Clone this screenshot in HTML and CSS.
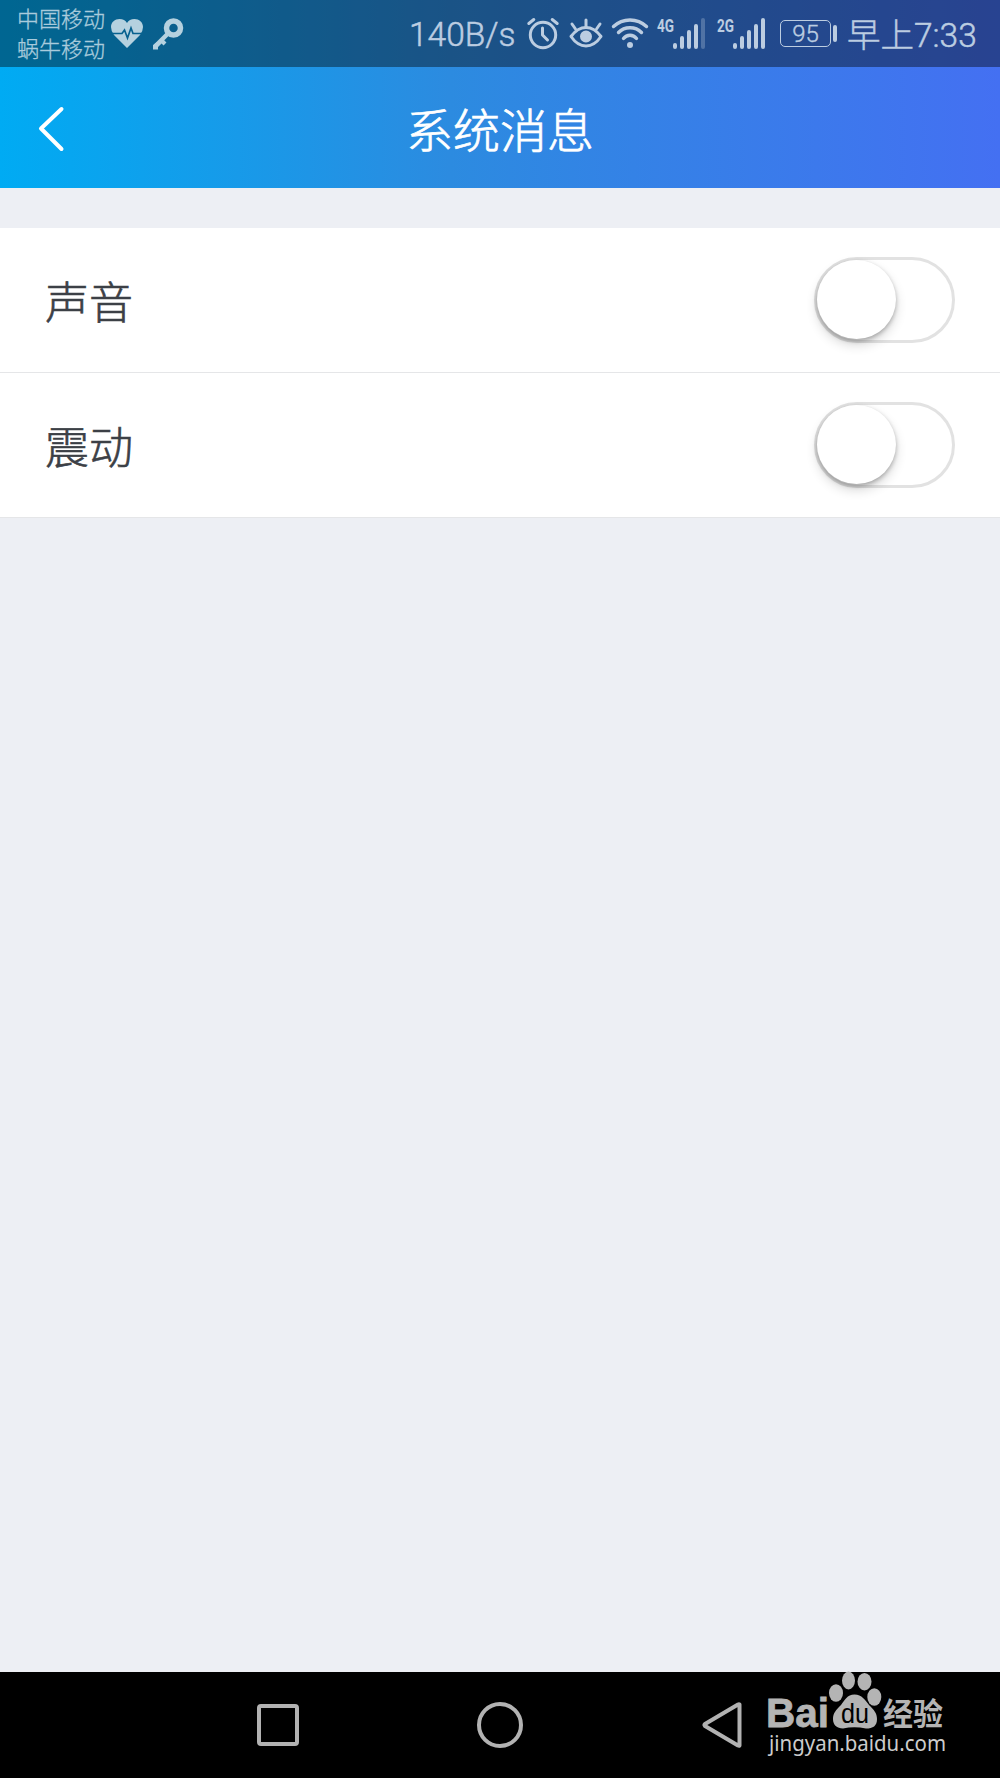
FILE: index.html
```
<!DOCTYPE html>
<html lang="zh-CN">
<head>
  <meta charset="UTF-8" />
  <meta name="viewport" content="width=device-width, initial-scale=1.0"/>
  <title>系统消息</title>
  <link rel="stylesheet" href="styles.css">
</head>
<body>
  <div class="screen">
    <div class="top">
      <div class="status-bar">
        <div class="carriers">
          <span>中国移动</span>
          <span>蜗牛移动</span>
        </div>
        <svg class="icon-heart" width="32" height="30" viewBox="0 0 32 30">
          <path d="M16 29L3 16Q0 12 0 8C0 3 4 0 8.500 0C12 0 14.500 1.500 16 4C17.500 1.500 20 0 23.500 0C28 0 32 3 32 8Q32 12 29 16Z" fill="currentColor"/>
          <path class="pulse" d="M0 14.500H11L13.500 11L16.500 19L20 9L22 14.500H32" fill="none" stroke-width="1.700"/>
        </svg>
        <svg class="icon-key" width="31" height="32" viewBox="0 0 31 32" fill="none" stroke="currentColor">
          <circle cx="20.500" cy="10" r="7" stroke-width="5.500"/>
          <path d="M15.500 15L2.500 28" stroke-width="4.500"/>
          <path d="M0 31.500V27L4 24L9 25L5 29V31.500Z" fill="currentColor" stroke="none"/>
          <path d="M8 22L12 26" stroke-width="4"/>
        </svg>

        <span class="speed">140B/s</span>
        <svg class="icon-alarm" width="32" height="32" viewBox="0 0 32 32" fill="none" stroke="currentColor" stroke-width="3" stroke-linecap="round" stroke-linejoin="round">
          <circle cx="16" cy="17" r="12.700"/>
          <path d="M15.500 10V17L20.500 22M1.800 5.500L6.800 1.500M25.200 1.500L30.200 5.500"/>
        </svg>
        <svg class="icon-eye" width="34" height="31" viewBox="0 0 34 31" fill="none" stroke="currentColor" stroke-width="3" stroke-linecap="round" stroke-linejoin="round">
          <path d="M2 18.500Q8.500 9.500 17 9.500T32 18.500Q25.500 28 17 28T2 18.500Z"/>
          <circle cx="17" cy="18.500" r="4.500" fill="currentColor"/>
          <path d="M17 2V9M3 6L6.500 11M31 6L27.500 11"/>
        </svg>
        <svg class="icon-wifi" width="38" height="31" viewBox="0 0 38 31" fill="none" stroke="currentColor" stroke-width="3.400" stroke-linecap="round">
          <path d="M2.500 8.500Q9.500 2 19 2T35.500 8.500M7.500 14.500Q12 9.700 19 9.700T30.500 14.500M12.500 20.500Q15 17.300 19 17.300T25.500 20.500"/>
          <circle cx="19" cy="27" r="3" fill="currentColor" stroke="none"/>
        </svg>
        <svg class="signal" width="50" height="31" viewBox="0 0 50 31" fill="none" stroke="currentColor" stroke-width="4" stroke-linecap="round">
          <text class="net" x="0" y="13.500" textLength="17" lengthAdjust="spacingAndGlyphs">4G</text>
          <path d="M18 27V29M25 20V29M32 14V29M39 8V29"/>
          <path class="dim" d="M46 2V29"/>
        </svg>
        <svg class="signal second" width="50" height="31" viewBox="0 0 50 31" fill="none" stroke="currentColor" stroke-width="4" stroke-linecap="round">
          <text class="net" x="0" y="13.500" textLength="17" lengthAdjust="spacingAndGlyphs">2G</text>
          <path d="M18 27V29M25 20V29M32 14V29M39 8V29M46 2V29"/>
        </svg>
        <div class="battery">95</div>
        <div class="battery-tip"></div>
        <span class="time">早上7:33</span>
      </div>

      <div class="header">
        <svg class="back" width="26" height="46" viewBox="0 0 26 46" fill="none" stroke="#fff" stroke-width="4" stroke-linecap="round" stroke-linejoin="round">
          <path d="M23.500 3L3 22.500L23.500 43"/>
        </svg>
        <h1>系统消息</h1>
      </div>
    </div>

    <div class="settings">
      <div class="row">
        <span>声音</span>
        <div class="switch"><div class="knob"></div></div>
      </div>
      <div class="row">
        <span>震动</span>
        <div class="switch"><div class="knob"></div></div>
      </div>
    </div>

    <div class="nav-bar">
      <svg width="42" height="42" viewBox="0 0 42 42" fill="none" stroke="currentColor" stroke-width="4">
        <rect x="2" y="2" width="38" height="38" rx="2"/>
      </svg>
      <svg width="46" height="46" viewBox="0 0 46 46" fill="none" stroke="currentColor" stroke-width="4">
        <circle cx="23" cy="23" r="21"/>
      </svg>
      <svg width="40" height="46" viewBox="0 0 40 46" fill="none" stroke="currentColor" stroke-width="4" stroke-linejoin="round">
        <path d="M37.500 2.500V43.500Q37 44 36 43.500L3 24Q2 23 3 22L36 2.500Q37 2 37.500 2.500Z"/>
      </svg>
    </div>

    <svg class="watermark" width="182" height="90" viewBox="0 0 182 90">
      <text class="brand" x="-1" y="55.500" textLength="63" lengthAdjust="spacingAndGlyphs">Bai</text>
      <ellipse cx="69" cy="22" rx="7" ry="8.800"/>
      <ellipse cx="81.500" cy="9.500" rx="6.500" ry="9"/>
      <ellipse cx="97.500" cy="10.700" rx="7" ry="8.700"/>
      <ellipse cx="107.300" cy="26" rx="7" ry="8.700"/>
      <path d="M87.500 23.500C95 23.500 98 29 102 34C107 39 110 42 110 48C110 55 106 57.500 99 57.500Q87 55 76 57.500C70 57.500 66 54 66 48C66 42 69 39 74 34C78 29 80 23.500 87.500 23.500Z"/>
      <text class="du" x="74" y="52" textLength="28" lengthAdjust="spacingAndGlyphs">du</text>
      <text class="exp" x="116" y="53.500" textLength="60" lengthAdjust="spacingAndGlyphs">经验</text>
      <text class="site" x="2" y="79.500" textLength="177" lengthAdjust="spacingAndGlyphs">jingyan.baidu.com</text>
    </svg>
  </div>
</body>
</html>
```
FILE: styles.css
```
* {
  box-sizing: border-box;
}

body {
  margin: 0;
  background: #edeff4;
  font-family: Roboto, "Noto Sans CJK SC", sans-serif;
}

.screen {
  position: relative;
  display: flex;
  flex-direction: column;
  width: 1000px;
  height: 1778px;
  overflow: hidden;
}

svg {
  display: block;
  flex-shrink: 0;
  overflow: visible;
}

.top {
  background: linear-gradient(90deg, #00abf3, #2c8be0 45%, #4470f2);
}

.status-bar {
  display: flex;
  align-items: center;
  height: 67px;
  padding-left: 17px;
  background: rgba(0, 0, 0, 0.4);
  color: #bccde1;
  white-space: nowrap;
}

.carriers {
  display: flex;
  flex-direction: column;
  width: 88px;
  font-size: 22px;
  font-weight: 300;
  line-height: 30px;
  padding-top: 3px;
  color: #a9cbdc;
  -webkit-text-stroke: 0.3px;
}

.icon-heart {
  margin-left: 6px;
  color: #b5d1df;
}

.pulse {
  stroke: #07618f;
}

.icon-key {
  margin-left: 10px;
  color: #b5d1df;
}

.speed {
  width: 106px;
  margin-left: 225px;
  padding-top: 2px;
  font-size: 33.5px;
  font-weight: 300;
  -webkit-text-stroke: 0.5px;
}

.icon-alarm {
  margin-left: 12px;
}

.icon-eye {
  margin-left: 10px;
}

.icon-wifi {
  margin-left: 8px;
}

.signal {
  margin-left: 8px;
}

.signal.second {
  margin-left: 10px;
}

.net {
  font: bold 19px Roboto, sans-serif;
  fill: currentColor;
  stroke: none;
}

.dim {
  opacity: 0.3;
}

.battery {
  width: 51px;
  height: 27px;
  margin-left: 13px;
  border: 1.5px solid;
  border-radius: 5px;
  font-size: 24px;
  font-weight: 300;
  line-height: 26px;
  text-align: center;
  -webkit-text-stroke: 0.4px;
}

.battery-tip {
  width: 4px;
  height: 17px;
  margin-left: 2px;
  border-radius: 2px;
  background: currentColor;
}

.time {
  margin: -3px 0 0 10px;
  font-size: 33.5px;
  font-weight: 300;
  -webkit-text-stroke: 0.5px;
}

.header {
  display: grid;
  grid-template-columns: 100px 1fr 100px;
  align-items: center;
  height: 121px;
}

.back {
  margin: 2px 0 0 38px;
}

h1 {
  margin: 0;
  color: #fff;
  font-size: 47px;
  font-weight: 300;
  text-align: center;
  -webkit-text-stroke: 0.7px;
}

.settings {
  margin-top: 40px;
  background: #fff;
}

.row {
  display: flex;
  align-items: center;
  justify-content: space-between;
  height: 145px;
  padding: 0 45px;
  border-bottom: 1px solid #e5e6e8;
  color: #3c4046;
  font-size: 44px;
  font-weight: 300;
}

.row span {
  -webkit-text-stroke: 0.6px;
}

.switch {
  width: 141px;
  height: 86px;
  border: 3px solid #e2e2e2;
  border-radius: 43px;
}

.knob {
  width: 79px;
  height: 79px;
  border-radius: 50%;
  background: #fff;
  box-shadow: 0 2px 4px rgba(0, 0, 0, 0.26), 0 6px 12px rgba(0, 0, 0, 0.16);
}

.nav-bar {
  display: flex;
  align-items: center;
  justify-content: space-between;
  height: 106px;
  margin-top: auto;
  padding: 0 258px 0 257px;
  background: #000;
  color: #b2b2b2;
}

.nav-bar svg:nth-child(2) {
  margin-right: 2px;
}

.watermark {
  position: absolute;
  left: 767px;
  top: 1671px;
  fill: #b4b4b4;
}

.brand {
  font: bold 40px "Liberation Sans", sans-serif;
  stroke: #b4b4b4;
  stroke-width: 0.8px;
}

.du {
  font: 28px "Liberation Sans", sans-serif;
  fill: #000;
}

.exp {
  font: bold 31px "Noto Sans CJK SC", sans-serif;
}

.site {
  font: 22px "Noto Sans", sans-serif;
  fill: #ccc;
}
```
